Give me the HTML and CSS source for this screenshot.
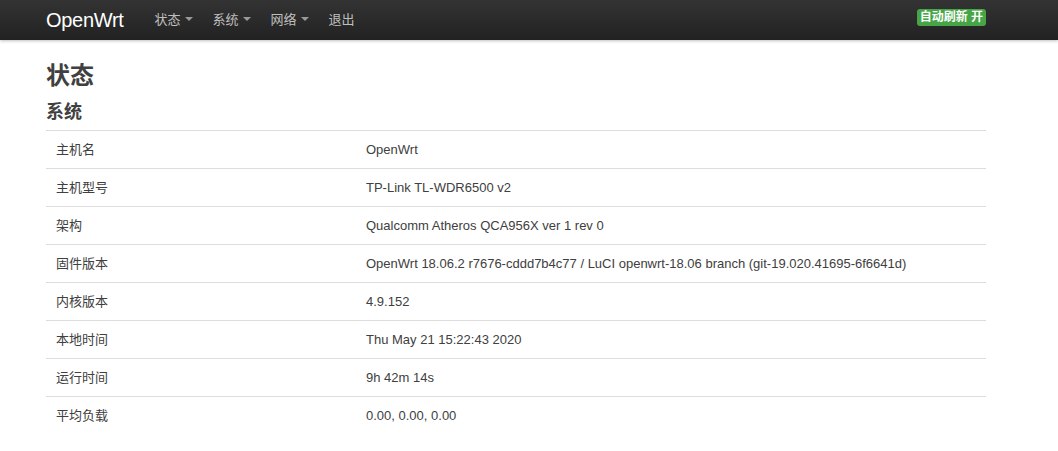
FILE: index.html
```html
<!DOCTYPE html>
<html lang="zh-CN">
<head>
<meta charset="utf-8">
<title>OpenWrt - 状态</title>
<link rel="stylesheet" href="styles.css">
</head>
<body>
<header class="navbar">
  <div class="nav-inner">
    <a class="brand" href="#">OpenWrt</a>
    <ul class="nav">
      <li><a href="#">状态<span class="caret"></span></a></li>
      <li><a href="#">系统<span class="caret"></span></a></li>
      <li><a href="#">网络<span class="caret"></span></a></li>
      <li><a href="#">退出</a></li>
    </ul>
    <span class="badge">自动刷新 开</span>
  </div>
</header>
<main class="container">
  <h2 class="page-title">状态</h2>
  <h3 class="section-title">系统</h3>
  <table class="info">
    <tr><td class="key">主机名</td><td>OpenWrt</td></tr>
    <tr><td class="key">主机型号</td><td>TP-Link TL-WDR6500 v2</td></tr>
    <tr><td class="key">架构</td><td>Qualcomm Atheros QCA956X ver 1 rev 0</td></tr>
    <tr><td class="key">固件版本</td><td>OpenWrt 18.06.2 r7676-cddd7b4c77 / LuCI openwrt-18.06 branch (git-19.020.41695-6f6641d)</td></tr>
    <tr><td class="key">内核版本</td><td>4.9.152</td></tr>
    <tr><td class="key">本地时间</td><td>Thu May 21 15:22:43 2020</td></tr>
    <tr><td class="key">运行时间</td><td>9h 42m 14s</td></tr>
    <tr><td class="key">平均负载</td><td>0.00, 0.00, 0.00</td></tr>
  </table>
</main>
</body>
</html>
```

FILE: styles.css
```css
* { box-sizing: border-box; }
body {
  margin: 0;
  font-family: "Liberation Sans", Arial, "Noto Sans CJK SC", sans-serif;
  font-size: 13px;
  color: #404040;
  background: #fff;
}
.navbar {
  height: 40px;
  background: linear-gradient(to bottom, #333333, #222222);
  box-shadow: 0 1px 3px rgba(0,0,0,0.25);
}
.nav-inner {
  width: 940px;
  margin-left: 46px;
  height: 40px;
  display: flex;
  align-items: center;
}
.brand {
  color: #ffffff;
  font-size: 20px;
  text-decoration: none;
  margin-right: 21px;
  line-height: 38px;
  letter-spacing: -0.3px;
}
.nav {
  list-style: none;
  margin: 0;
  padding: 0;
  display: flex;
  height: 40px;
}
.nav a {
  display: flex;
  align-items: center;
  height: 40px;
  padding: 0 10px 4px;
  color: #bfbfbf;
  text-decoration: none;
  font-size: 13px;
}
.caret {
  display: inline-block;
  width: 0;
  height: 0;
  margin-left: 4px;
  border-left: 4px solid transparent;
  border-right: 4px solid transparent;
  border-top: 4px solid #999;
  margin-top: 1px;
}
.badge {
  margin-left: auto;
  background: #46a546;
  color: #fff;
  font-weight: bold;
  font-size: 12px;
  line-height: 15px;
  padding: 1px 3px;
  border-radius: 3px;
  margin-top: -6px;
}
.container {
  width: 940px;
  margin-left: 46px;
  padding-top: 20px;
}
.page-title {
  margin: 0;
  font-size: 24px;
  line-height: 32px;
  font-weight: bold;
  color: #404040;
}
.section-title {
  margin: 8px 0 0;
  font-size: 18px;
  line-height: 24px;
  font-weight: bold;
  color: #404040;
}
.info {
  width: 100%;
  border-collapse: collapse;
  margin-top: 6px;
}
.info td {
  border-top: 1px solid #dddddd;
  padding: 0 10px;
  height: 38px;
  vertical-align: middle;
  line-height: 18px;
}
.info td.key { width: 310px; }
```
